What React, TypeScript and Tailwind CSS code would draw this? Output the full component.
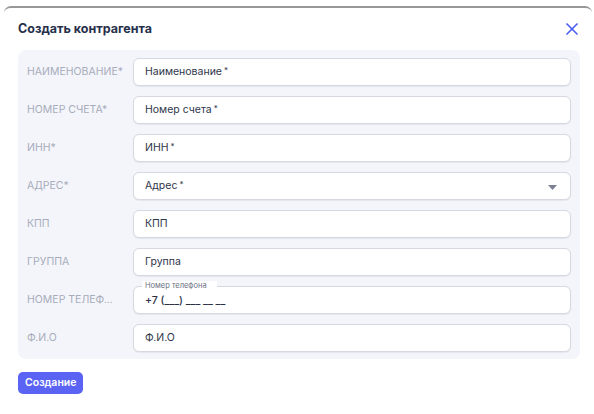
import { X } from "lucide-react";

const fields = [
  { label: "НАИМЕНОВАНИЕ*", placeholder: "Наименование", required: true },
  { label: "НОМЕР СЧЕТА*", placeholder: "Номер счета", required: true },
  { label: "ИНН*", placeholder: "ИНН", required: true },
  { label: "АДРЕС*", placeholder: "Адрес", required: true, select: true },
  { label: "КПП", placeholder: "КПП" },
  { label: "ГРУППА", placeholder: "Группа" },
  { label: "НОМЕР ТЕЛЕФ...", placeholder: "", phone: true },
  { label: "Ф.И.О", placeholder: "Ф.И.О" },
];

function Field({ f }: { f: (typeof fields)[number] }) {
  if (f.phone) {
    return (
      <div className="relative flex-1 h-[28px] rounded-[6px] border border-[#d6d8df] bg-white shadow-[0_1px_1px_rgba(0,0,0,0.06)] flex items-center px-[11px]">
        <span className="absolute -top-[6px] left-[8px] bg-white px-[3px] pr-[10px] text-[7.5px] leading-[10px] text-[#6b7083]">
          Номер телефона
        </span>
        <span className="text-[10.5px] font-medium text-[#2a3145] mt-[2px]">+7 (___) ___ __ __</span>
      </div>
    );
  }
  return (
    <div className="flex-1 h-[28px] rounded-[6px] border border-[#d6d8df] bg-white shadow-[0_1px_1px_rgba(0,0,0,0.06)] flex items-center justify-between px-[11px]">
      <span className="text-[10.5px] text-[#2f364a]">
        {f.placeholder}
        {f.required && <span className="ml-[2px] text-[8px] align-top">*</span>}
      </span>
      {f.select && (
        <svg width="9" height="5" viewBox="0 0 9 5" className="mt-[2px] mr-[2px]">
          <path d="M0 0h9L4.5 5z" fill="#7c8094" />
        </svg>
      )}
    </div>
  );
}

export default function App() {
  return (
    <div className="w-[594px] h-[414px] bg-white pt-[6px] font-['Inter',sans-serif]">
      <div className="h-full ml-[4px] mr-[2px] rounded-t-[7px] bg-white border-t-2 border-[#6b6b6b]/70 pl-[14px] pr-[12px]">
        {/* Header */}
        <div className="flex items-center justify-between h-[42px]">
          <h2 className="text-[12.5px] font-bold text-[#27304b]">Создать контрагента</h2>
          <X className="w-[20px] h-[20px] text-[#4a5cf0] mr-[-2px]" strokeWidth={2} />
        </div>

        {/* Form panel */}
        <div className="rounded-[8px] bg-[#f4f5fa] pt-[8px] pb-[7px] px-[9px] flex flex-col gap-[10px]">
          {fields.map((f) => (
            <div key={f.label} className="flex items-center">
              <span className="w-[106px] text-[10.5px] text-[#a7acbb] whitespace-nowrap">{f.label}</span>
              <Field f={f} />
            </div>
          ))}
        </div>

        {/* Footer */}
        <div className="pt-[9px]">
          <button className="h-[22px] px-[7px] rounded-[5px] bg-[#5a63f4] text-white text-[10.5px] font-semibold">
            Создание
          </button>
        </div>
      </div>
    </div>
  );
}
